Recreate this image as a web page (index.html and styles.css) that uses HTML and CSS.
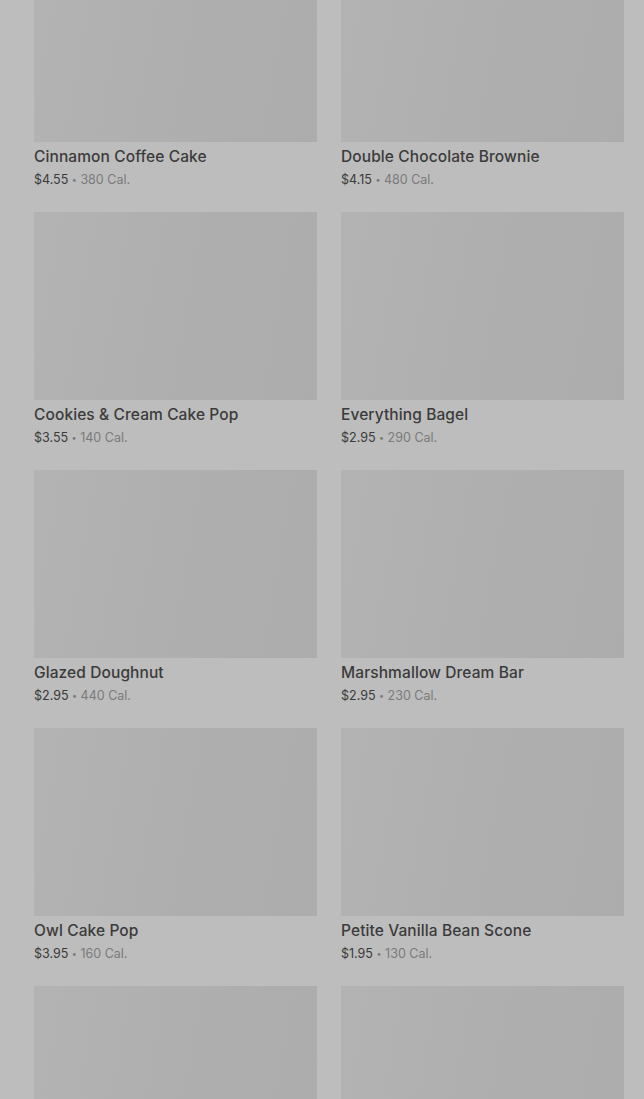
FILE: index.html
```html
<!DOCTYPE html>
<html lang="en">
<head>
    <meta charset="UTF-8">
    <meta name="viewport" content="width=device-width, initial-scale=1.0">
    <title>Bakery Menu</title>
    <link rel="stylesheet" href="styles.css">
</head>
<body>
    <main class="menu-grid">
        <div class="item">
            <div class="item-img"></div>
            <h3 class="item-name">Cinnamon Coffee Cake</h3>
            <p class="item-meta"><span class="price">$4.55</span> <span class="dot">&bull;</span> <span class="cal">380 Cal.</span></p>
        </div>
        <div class="item">
            <div class="item-img"></div>
            <h3 class="item-name">Double Chocolate Brownie</h3>
            <p class="item-meta"><span class="price">$4.15</span> <span class="dot">&bull;</span> <span class="cal">480 Cal.</span></p>
        </div>
        <div class="item">
            <div class="item-img"></div>
            <h3 class="item-name">Cookies &amp; Cream Cake Pop</h3>
            <p class="item-meta"><span class="price">$3.55</span> <span class="dot">&bull;</span> <span class="cal">140 Cal.</span></p>
        </div>
        <div class="item">
            <div class="item-img"></div>
            <h3 class="item-name">Everything Bagel</h3>
            <p class="item-meta"><span class="price">$2.95</span> <span class="dot">&bull;</span> <span class="cal">290 Cal.</span></p>
        </div>
        <div class="item">
            <div class="item-img"></div>
            <h3 class="item-name">Glazed Doughnut</h3>
            <p class="item-meta"><span class="price">$2.95</span> <span class="dot">&bull;</span> <span class="cal">440 Cal.</span></p>
        </div>
        <div class="item">
            <div class="item-img"></div>
            <h3 class="item-name">Marshmallow Dream Bar</h3>
            <p class="item-meta"><span class="price">$2.95</span> <span class="dot">&bull;</span> <span class="cal">230 Cal.</span></p>
        </div>
        <div class="item">
            <div class="item-img"></div>
            <h3 class="item-name">Owl Cake Pop</h3>
            <p class="item-meta"><span class="price">$3.95</span> <span class="dot">&bull;</span> <span class="cal">160 Cal.</span></p>
        </div>
        <div class="item">
            <div class="item-img"></div>
            <h3 class="item-name">Petite Vanilla Bean Scone</h3>
            <p class="item-meta"><span class="price">$1.95</span> <span class="dot">&bull;</span> <span class="cal">130 Cal.</span></p>
        </div>
        <div class="item">
            <div class="item-img"></div>
        </div>
        <div class="item">
            <div class="item-img"></div>
        </div>
    </main>
</body>
</html>
```

FILE: styles.css
```css
body {
    font-family: Inter, "Noto Sans", sans-serif;
    margin: 0;
    padding: 0;
    background-color: #bdbdbd;
    overflow: hidden;
}

.menu-grid {
    display: grid;
    grid-template-columns: 283px 283px;
    column-gap: 24px;
    row-gap: 24px;
    padding: 0 20px 0 34px;
    margin-top: -46px;
}

.item {
    height: 234px;
}

.item-img {
    height: 188px;
    background: linear-gradient(100deg, #b3b3b3 0%, #afafaf 50%, #acacac 100%);
}

.item-name {
    margin: 5px 0 0;
    font-size: 15.5px;
    font-weight: 500;
    line-height: 20px;
    color: #3b3b3b;
    letter-spacing: 0.1px;
}

.item-meta {
    margin: 4px 0 0;
    font-size: 12.5px;
    line-height: 18px;
    color: #7a7a7a;
}

.price {
    color: #3a3a3a;
}

.dot {
    font-size: 9px;
    vertical-align: 1px;
}

.cal {
    color: #7a7a7a;
}
```
